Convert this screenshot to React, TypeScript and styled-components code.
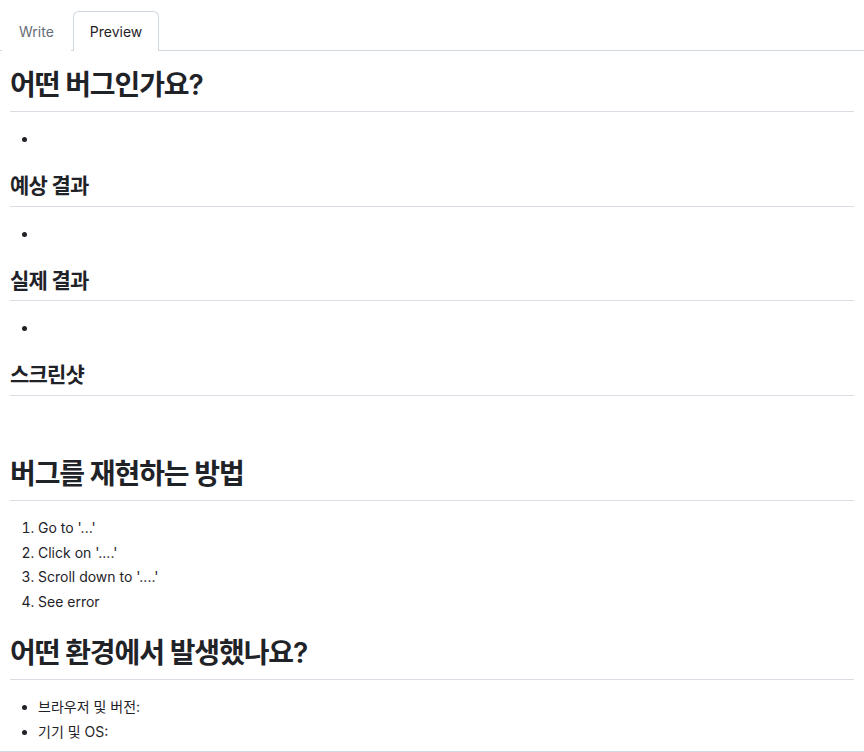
import styled, { createGlobalStyle } from 'styled-components';

const GlobalStyle = createGlobalStyle`
  body {
    margin: 0;
    background: #ffffff;
    color: #1f2328;
    font-family: Inter, "Noto Sans CJK KR", "Noto Sans", sans-serif;
    font-size: 14px;
    line-height: 1.5;
  }
`;

const TabBar = styled.div`
  display: flex;
  gap: 2px;
  margin-top: 11px;
  padding-left: 2px;
  border-bottom: 1px solid #d0d7de;
`;

const Tab = styled.button<{ $active?: boolean }>`
  margin-bottom: -1px;
  padding: 8px 16px;
  font-family: inherit;
  font-size: 14px;
  line-height: 23px;
  color: ${(p) => (p.$active ? '#1f2328' : '#656d76')};
  background: #ffffff;
  border: 1px solid ${(p) => (p.$active ? '#d0d7de' : 'transparent')};
  border-bottom: 0;
  border-radius: 6px 6px 0 0;
  cursor: pointer;
`;

const Preview = styled.div`
  padding: 0 10px 9px;
  border-bottom: 2px solid #d1d9e0;

  & > *:first-child {
    margin-top: 17px;
  }

  & > *:last-child {
    margin-bottom: 0;
  }
`;

const Title = styled.h1`
  margin: 24px 0 16px;
  padding-bottom: 0.3em;
  font-size: 28px;
  font-weight: 600;
  line-height: 1.25;
  letter-spacing: -0.04em;
  border-bottom: 1px solid #d8dee4;
`;

const Subtitle = styled.h2`
  margin: 24px 0 16px;
  padding-bottom: 0.3em;
  font-size: 21px;
  font-weight: 600;
  line-height: 1.25;
  letter-spacing: -0.04em;
  border-bottom: 1px solid #d8dee4;
`;

const Blank = styled.p`
  margin: 0 0 16px;
  height: 21px;
`;

const Bullets = styled.ul`
  margin: 0 0 16px;
  padding-left: 28px;

  & > li + li {
    margin-top: 3.5px;
  }
`;

const Steps = styled.ol`
  margin: 0 0 16px;
  padding-left: 28px;

  & > li + li {
    margin-top: 3.5px;
  }
`;

const steps = ["Go to '...'", "Click on '....'", "Scroll down to '....'", 'See error'];

export default function App() {
  return (
    <>
      <GlobalStyle />
      <TabBar>
        <Tab>Write</Tab>
        <Tab $active>Preview</Tab>
      </TabBar>
      <Preview>
        <Title>어떤 버그인가요?</Title>
        <Bullets>
          <li></li>
        </Bullets>
        <Subtitle>예상 결과</Subtitle>
        <Bullets>
          <li></li>
        </Bullets>
        <Subtitle>실제 결과</Subtitle>
        <Bullets>
          <li></li>
        </Bullets>
        <Subtitle>스크린샷</Subtitle>
        <Blank />
        <Title>버그를 재현하는 방법</Title>
        <Steps>
          {steps.map((s) => (
            <li key={s}>{s}</li>
          ))}
        </Steps>
        <Title>어떤 환경에서 발생했나요?</Title>
        <Bullets>
          <li>브라우저 및 버전:</li>
          <li>기기 및 OS:</li>
        </Bullets>
      </Preview>
    </>
  );
}
